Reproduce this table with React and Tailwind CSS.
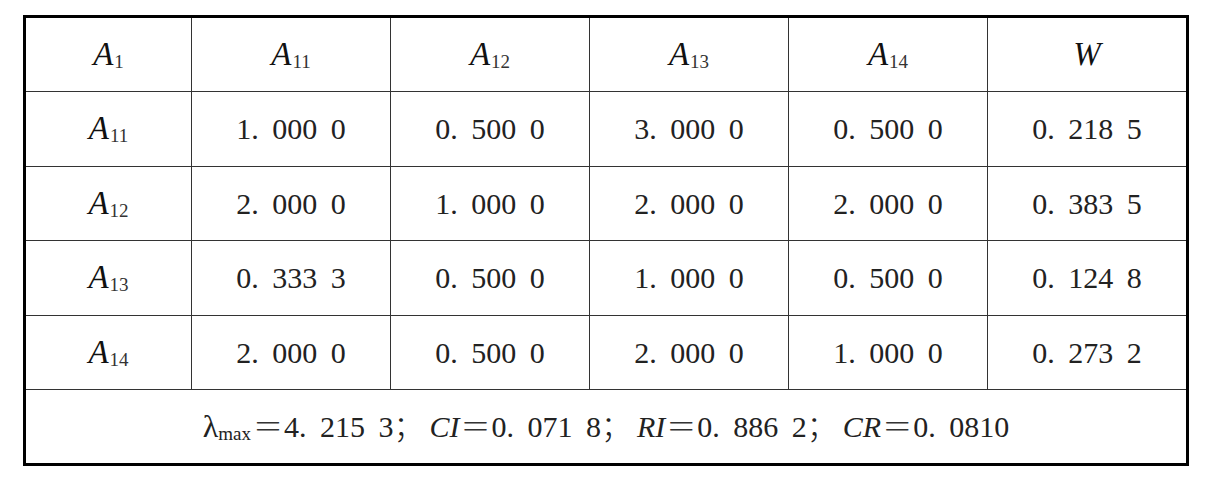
import React from 'react';

const rows = [
  { name: '11', values: ['1. 000 0', '0. 500 0', '3. 000 0', '0. 500 0', '0. 218 5'] },
  { name: '12', values: ['2. 000 0', '1. 000 0', '2. 000 0', '2. 000 0', '0. 383 5'] },
  { name: '13', values: ['0. 333 3', '0. 500 0', '1. 000 0', '0. 500 0', '0. 124 8'] },
  { name: '14', values: ['2. 000 0', '0. 500 0', '2. 000 0', '1. 000 0', '0. 273 2'] },
];

const colWidths = ['w-[167px]', 'w-[199px]', 'w-[199px]', 'w-[199px]', 'w-[199px]', 'w-[200px]'];

// italic A with an upright subscript, like the typeset original
function Sym({ sub }) {
  return (
    <span className="whitespace-nowrap">
      <span className="italic text-[33px]">A</span>
      <span className="text-[19px] relative top-[3px] ml-[1px] text-[#333]">{sub}</span>
    </span>
  );
}

function Num({ children }) {
  return <span className="text-[30px] [word-spacing:6px] whitespace-nowrap text-[#222]">{children}</span>;
}

function Eq() {
  return <span className="font-['Noto_Sans_CJK_SC'] font-light text-[#333] mx-[1px]">＝</span>;
}

function Semi() {
  return <span className="font-['Noto_Sans_CJK_SC'] font-light mr-[6px]">；</span>;
}

export default function App() {
  const cell = 'border border-[#333] text-center align-middle p-0';

  return (
    <div className="w-[1225px] h-[502px] bg-white pt-[15px] pl-[23px] text-[#111] font-['Liberation_Serif','Noto_Sans_CJK_SC',serif]">
      <table className="border-collapse border-[3px] border-black table-fixed w-[1163px]">
        <colgroup>
          {colWidths.map((w, i) => (
            <col key={i} className={w} />
          ))}
        </colgroup>
        <thead>
          <tr className="h-[75px]">
            <th className={cell + ' font-normal'}><Sym sub="1" /></th>
            <th className={cell + ' font-normal'}><Sym sub="11" /></th>
            <th className={cell + ' font-normal'}><Sym sub="12" /></th>
            <th className={cell + ' font-normal'}><Sym sub="13" /></th>
            <th className={cell + ' font-normal'}><Sym sub="14" /></th>
            <th className={cell + ' font-normal'}><span className="italic text-[33px]">W</span></th>
          </tr>
        </thead>
        <tbody>
          {rows.map((r) => (
            <tr key={r.name} className="h-[74.5px]">
              <td className={cell}><Sym sub={r.name} /></td>
              {r.values.map((v, i) => (
                <td key={i} className={cell}><Num>{v}</Num></td>
              ))}
            </tr>
          ))}
          <tr className="h-[74.5px]">
            <td colSpan={6} className={cell}>
              <span className="text-[30px] [word-spacing:6px] whitespace-nowrap text-[#222]">
                <span className="text-[32px]">λ</span>
                <span className="text-[19px] relative top-[3px] mr-[1px]">max</span>
                <Eq />4. 215 3<Semi />
                <span className="italic">CI</span>
                <Eq />0. 071 8<Semi />
                <span className="italic">RI</span>
                <Eq />0. 886 2<Semi />
                <span className="italic">CR</span>
                <Eq />0. 0810
              </span>
            </td>
          </tr>
        </tbody>
      </table>
    </div>
  );
}
